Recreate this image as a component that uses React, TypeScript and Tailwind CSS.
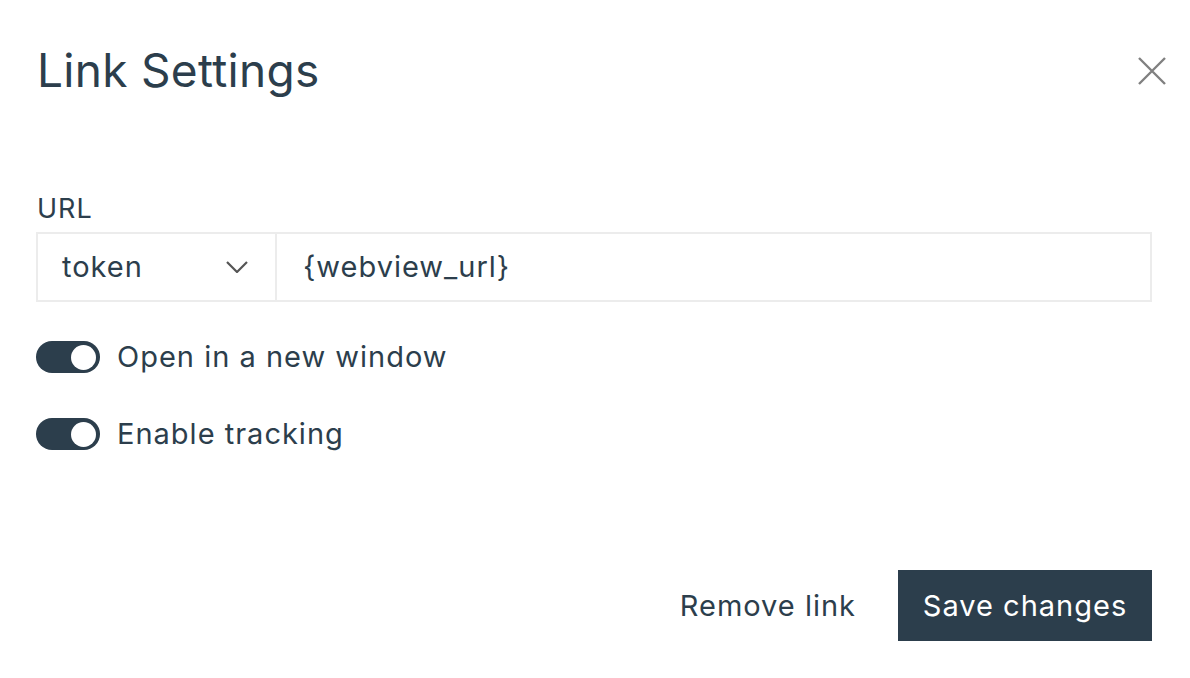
export default function App() {
  return (
    <div className="flex h-[678px] w-full flex-col bg-white pl-[36px] pr-[38px] font-['Inter','Noto_Sans',sans-serif] text-[#2c3e4c]">
      {/* Header */}
      <div className="flex items-start justify-between pt-[40px]">
        <h1 className="pl-px text-[46px] leading-[60px] font-normal tracking-[0.3px]">Link Settings</h1>
        <button className="mt-[14px] mr-[-17px] p-[2px] text-[#808080]">
          <svg width="30" height="30" viewBox="0 0 30 30" fill="none" stroke="currentColor" strokeWidth="2.4">
            <path d="M2 2 L28 28 M28 2 L2 28" />
          </svg>
        </button>
      </div>

      {/* URL field */}
      <label className="mt-[94px] pl-px text-[27px] leading-[30px] tracking-[1px]">URL</label>
      <div className="mt-[8px] flex h-[70px] border-2 border-[#ececec]">
        <div className="flex w-[239px] items-center justify-between border-r-2 border-[#ececec] pr-[27px] pl-[24px]">
          <span className="text-[29px] tracking-[1px]">token</span>
          <svg width="22" height="12" viewBox="0 0 22 12" fill="none" stroke="#555" strokeWidth="2.2">
            <path d="M1 1 L11 11 L21 1" />
          </svg>
        </div>
        <div className="flex flex-1 items-center pl-[26px] text-[29px] tracking-[1px]">{"{webview_url}"}</div>
      </div>

      {/* Toggles */}
      <div className="mt-[39px] flex flex-col gap-[45px]">
        {["Open in a new window", "Enable tracking"].map((label) => (
          <div key={label} className="flex items-center gap-[17px]">
            <div className="flex h-[32px] w-[64px] items-center justify-end rounded-full bg-[#2c3e4c] pr-[4px]">
              <div className="h-[25px] w-[25px] rounded-full bg-white" />
            </div>
            <span className="text-[29px] leading-[32px] tracking-[1px]">{label}</span>
          </div>
        ))}
      </div>

      {/* Footer */}
      <div className="mt-auto mb-[37px] flex items-center justify-end gap-[42px]">
        <button className="text-[29px] tracking-[1px]">Remove link</button>
        <button className="h-[71px] w-[254px] bg-[#2c3e4c] text-[29px] tracking-[1px] text-white">Save changes</button>
      </div>
    </div>
  );
}
